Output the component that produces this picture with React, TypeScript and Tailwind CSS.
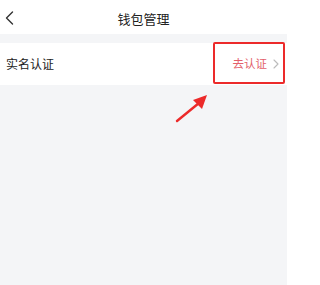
const App = () => (
  <div
    className="relative h-[285px] w-[287px] overflow-hidden bg-[#f4f5f7]"
    style={{ fontFamily: '"Noto Sans CJK SC", "Noto Sans", sans-serif' }}
  >
    <header className="relative flex h-[34px] items-center justify-center bg-white">
      <svg className="absolute left-[5px] top-[11px]" width="9" height="14" viewBox="0 0 9 14" fill="none">
        <path d="M7.5 1 L1.5 7 L7.5 13" stroke="#333" strokeWidth="1.4" strokeLinecap="round" strokeLinejoin="round" />
      </svg>
      <h1 className="mt-[4px] text-[13px] text-[#222]">钱包管理</h1>
    </header>

    <div className="mt-[9px] flex h-[42px] items-center justify-between bg-white pl-[6px] pr-[8px]">
      <span className="text-[12px] text-[#222]">实名认证</span>
      <div className="flex items-center gap-[6px]">
        <span className="text-[11.5px] text-[#e3606a]">去认证</span>
        <svg width="6" height="10" viewBox="0 0 6 10" fill="none">
          <path d="M1 1 L5 5 L1 9" stroke="#bbb" strokeWidth="1.1" strokeLinecap="round" strokeLinejoin="round" />
        </svg>
      </div>
    </div>

    {/* annotation box */}
    <div className="absolute left-[213px] top-[42px] h-[42px] w-[72px] rounded-[2px] border-2 border-[#ec2a2a]" />

    {/* annotation arrow */}
    <svg className="absolute left-[172px] top-[90px]" width="40" height="36" viewBox="0 0 40 36">
      <path d="M5 31 L27 13" stroke="#ec2a2a" strokeWidth="2.4" strokeLinecap="round" />
      <path d="M35 5 L21 10 L30 19 Z" fill="#ec2a2a" />
    </svg>
  </div>
)

export default App
